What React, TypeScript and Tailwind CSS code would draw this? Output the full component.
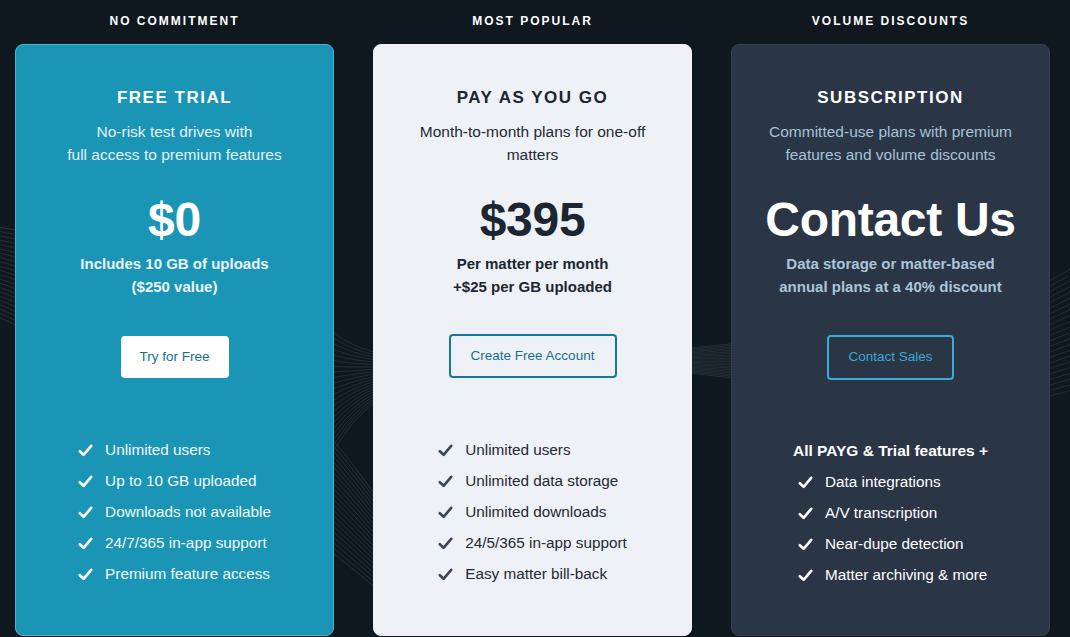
import React from "react";

const CheckIcon = ({ color }: { color: string }) => (
  <svg width="15" height="13" viewBox="0 0 15 13" fill="none" className="shrink-0">
    <path d="M1.8 7.2 L5.6 10.8 L13.2 1.8" stroke={color} strokeWidth="2.6" strokeLinecap="round" strokeLinejoin="round" />
  </svg>
);

type Plan = {
  label: string;
  title: string;
  sub: string[];
  price: string;
  notes: string[];
  button: string;
  features: string[];
  heading?: string;
  card: string;
  titleC: string;
  subC: string;
  priceC: string;
  noteC: string;
  btn: string;
  btnWrap: string;
  featC: string;
  checkC: string;
};

const plans: Plan[] = [
  {
    label: "NO COMMITMENT",
    title: "FREE TRIAL",
    sub: ["No-risk test drives with", "full access to premium features"],
    price: "$0",
    notes: ["Includes 10 GB of uploads", "($250 value)"],
    button: "Try for Free",
    features: ["Unlimited users", "Up to 10 GB uploaded", "Downloads not available", "24/7/365 in-app support", "Premium feature access"],
    card: "bg-[#1b95b5] border border-[#4ab3cf]",
    titleC: "text-white",
    subC: "text-[#e2f3f8]",
    priceC: "text-white",
    noteC: "text-[#eaf6fa]",
    btn: "bg-white text-[#17718d] border-2 border-white w-[108px] h-[42px]",
    btnWrap: "mt-[38px]",
    featC: "text-[#f2fafc]",
    checkC: "#ffffff",
  },
  {
    label: "MOST POPULAR",
    title: "PAY AS YOU GO",
    sub: ["Month-to-month plans for one-off", "matters"],
    price: "$395",
    notes: ["Per matter per month", "+$25 per GB uploaded"],
    button: "Create Free Account",
    features: ["Unlimited users", "Unlimited data storage", "Unlimited downloads", "24/5/365 in-app support", "Easy matter bill-back"],
    card: "bg-[#eef1f5] border border-[#eef1f5]",
    titleC: "text-[#1c2632]",
    subC: "text-[#1f2a36]",
    priceC: "text-[#1c2632]",
    noteC: "text-[#1c2632]",
    btn: "bg-transparent text-[#1a6f8b] border-2 border-[#1a7897] w-[168px] h-[44px]",
    btnWrap: "mt-[36px]",
    featC: "text-[#1f2a36]",
    checkC: "#3a4756",
  },
  {
    label: "VOLUME DISCOUNTS",
    title: "SUBSCRIPTION",
    sub: ["Committed-use plans with premium", "features and volume discounts"],
    price: "Contact Us",
    notes: ["Data storage or matter-based", "annual plans at a 40% discount"],
    button: "Contact Sales",
    heading: "All PAYG & Trial features +",
    features: ["Data integrations", "A/V transcription", "Near-dupe detection", "Matter archiving & more"],
    card: "bg-[#2a3545] border border-[#34404f]",
    titleC: "text-white",
    subC: "text-[#a3c4da]",
    priceC: "text-white",
    noteC: "text-[#a9c6da]",
    btn: "bg-transparent text-[#3aa9d2] border-2 border-[#38acd6] w-[127px] h-[45px]",
    btnWrap: "mt-[37px]",
    featC: "text-white",
    checkC: "#ffffff",
  },
];

const Waves = () => {
  const left = Array.from({ length: 22 }, (_, i) => i);
  return (
    <svg className="absolute inset-0 w-full h-full pointer-events-none" viewBox="0 0 1070 637" preserveAspectRatio="none">
      {left.map((i) => (
        <path
          key={"a" + i}
          d={`M -20 ${225 + i * 4} C 120 ${240 + i * 6}, 250 ${300 + i * 9}, 420 ${560 + i * 3}`}
          stroke="#8fa3ad"
          strokeOpacity="0.22"
          strokeWidth="0.8"
          fill="none"
        />
      ))}
      {left.map((i) => (
        <path
          key={"b" + i}
          d={`M 330 ${330 + i * 6} C 360 ${350 + i * 3}, 380 ${380 - i * 2}, 720 ${345 + i * 1.5} S 1000 ${300 + i * 5}, 1090 ${260 + i * 6}`}
          stroke="#8fa3ad"
          strokeOpacity="0.2"
          strokeWidth="0.8"
          fill="none"
        />
      ))}
    </svg>
  );
};

export default function App() {
  return (
    <div
      className="relative w-[1070px] h-[637px] overflow-hidden bg-[#0f181e]"
      style={{ fontFamily: '"Liberation Sans", Arial, sans-serif' }}
    >
      <Waves />
      <div className="relative ml-[15px] w-[1035px] grid grid-cols-3 gap-[39px]">
        {plans.map((p) => (
          <div key={p.label} className="flex flex-col">
            <div className="h-[44px] flex items-start justify-center pt-[14px]">
              <span className="text-[12px] leading-[14px] font-bold tracking-[2px] text-white">{p.label}</span>
            </div>
            <div className={`h-[592px] rounded-[8px] flex flex-col items-center pt-[41px] ${p.card}`}>
              <div className={`text-[17px] leading-[24px] font-bold tracking-[1.5px] ${p.titleC}`}>{p.title}</div>
              <div className={`mt-[10px] text-[15.5px] leading-[23px] text-center ${p.subC}`}>
                {p.sub.map((s) => (
                  <div key={s}>{s}</div>
                ))}
              </div>
              <div className={`mt-[26px] h-[56px] flex items-center text-[48px] leading-[56px] font-bold tracking-[-0.3px] ${p.priceC}`}>
                {p.price}
              </div>
              <div className={`mt-[4px] text-[15px] leading-[23px] font-bold text-center ${p.noteC}`}>
                {p.notes.map((s) => (
                  <div key={s}>{s}</div>
                ))}
              </div>
              <div className={`${p.btnWrap} flex items-center`}>
                <div className={`rounded-[4px] flex items-center justify-center text-[13.5px] ${p.btn}`}>{p.button}</div>
              </div>
              <div className={`${p.heading ? "mt-[55px]" : "mt-[57px]"} w-fit mx-auto flex flex-col`}>
                {p.heading && (
                  <div className={`h-[32px] flex items-center text-[15.5px] font-bold ${p.featC}`}>{p.heading}</div>
                )}
                {p.features.map((f) => (
                  <div key={f} className={`h-[31px] flex items-center gap-[12px] text-[15.3px] ${p.heading ? "pl-[5px]" : ""} ${p.featC}`}>
                    <CheckIcon color={p.checkC} />
                    <span>{f}</span>
                  </div>
                ))}
              </div>
            </div>
          </div>
        ))}
      </div>
    </div>
  );
}
